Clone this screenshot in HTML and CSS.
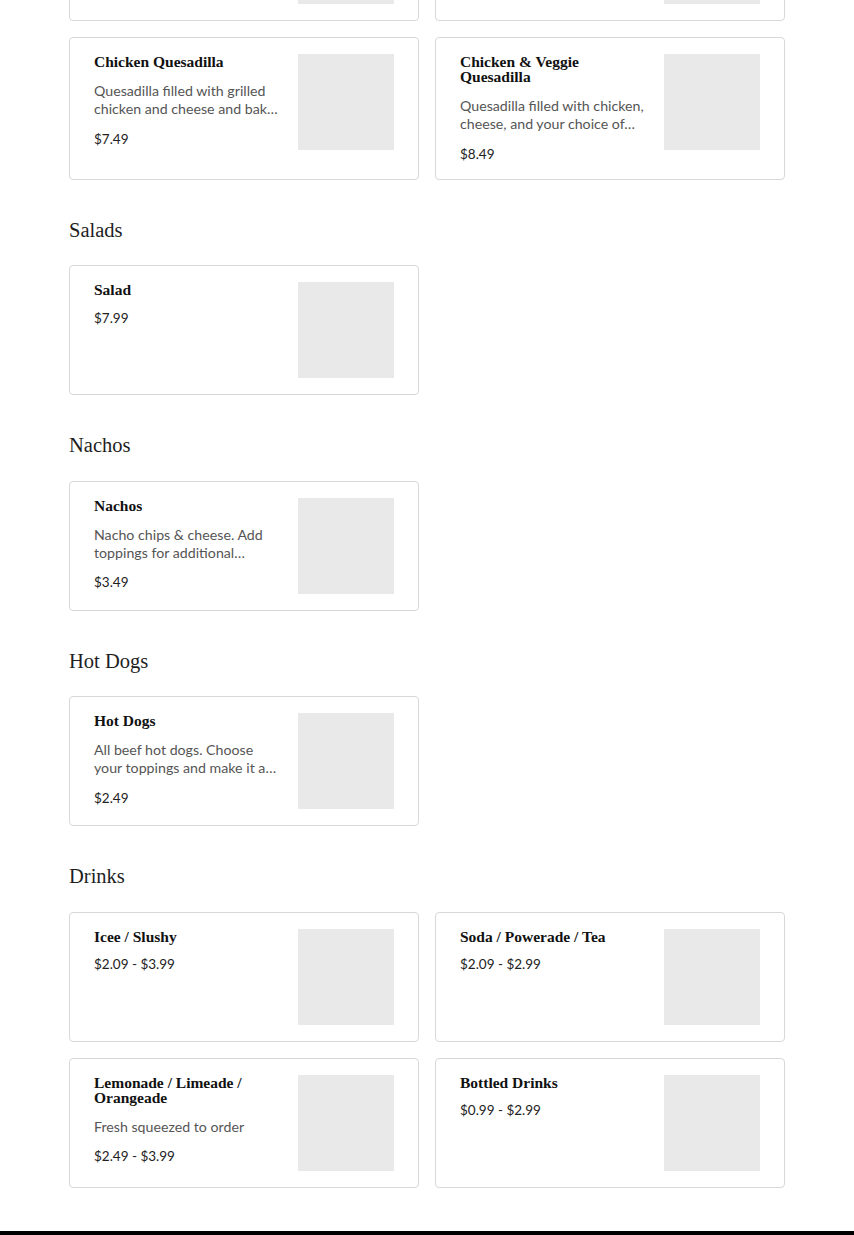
FILE: index.html
```html
<!DOCTYPE html>
<html lang="en">
<head>
<meta charset="utf-8">
<title>Menu</title>
<link rel="stylesheet" href="styles.css">
</head>
<body>
<main class="menu">
  <section class="section">
    <h2 class="section-title">Quesadillas</h2>
    <div class="grid">
      <article class="card">
        <div class="info">
          <h3 class="name">Cheese Quesadilla</h3>
          <p class="desc">Quesadilla filled with cheese and baked until golden…</p>
          <p class="price">$5.49</p>
        </div>
        <div class="thumb"></div>
      </article>
      <article class="card">
        <div class="info">
          <h3 class="name">Veggie Quesadilla</h3>
          <p class="desc">Quesadilla filled with cheese and your choice of…</p>
          <p class="price">$6.49</p>
        </div>
        <div class="thumb"></div>
      </article>
      <article class="card">
        <div class="info">
          <h3 class="name">Chicken Quesadilla</h3>
          <p class="desc">Quesadilla filled with grilled chicken and cheese and bak…</p>
          <p class="price">$7.49</p>
        </div>
        <div class="thumb"></div>
      </article>
      <article class="card">
        <div class="info">
          <h3 class="name">Chicken &amp; Veggie Quesadilla</h3>
          <p class="desc">Quesadilla filled with chicken, cheese, and your choice of…</p>
          <p class="price">$8.49</p>
        </div>
        <div class="thumb"></div>
      </article>
    </div>
  </section>

  <section class="section">
    <h2 class="section-title">Salads</h2>
    <div class="grid">
      <article class="card">
        <div class="info">
          <h3 class="name">Salad</h3>
          <p class="price">$7.99</p>
        </div>
        <div class="thumb"></div>
      </article>
    </div>
  </section>

  <section class="section">
    <h2 class="section-title">Nachos</h2>
    <div class="grid">
      <article class="card">
        <div class="info">
          <h3 class="name">Nachos</h3>
          <p class="desc">Nacho chips &amp; cheese. Add toppings for additional…</p>
          <p class="price">$3.49</p>
        </div>
        <div class="thumb"></div>
      </article>
    </div>
  </section>

  <section class="section">
    <h2 class="section-title">Hot Dogs</h2>
    <div class="grid">
      <article class="card">
        <div class="info">
          <h3 class="name">Hot Dogs</h3>
          <p class="desc">All beef hot dogs. Choose your toppings and make it a…</p>
          <p class="price">$2.49</p>
        </div>
        <div class="thumb"></div>
      </article>
    </div>
  </section>

  <section class="section">
    <h2 class="section-title">Drinks</h2>
    <div class="grid">
      <article class="card">
        <div class="info">
          <h3 class="name">Icee / Slushy</h3>
          <p class="price">$2.09 - $3.99</p>
        </div>
        <div class="thumb"></div>
      </article>
      <article class="card">
        <div class="info">
          <h3 class="name">Soda / Powerade / Tea</h3>
          <p class="price">$2.09 - $2.99</p>
        </div>
        <div class="thumb"></div>
      </article>
      <article class="card">
        <div class="info">
          <h3 class="name">Lemonade / Limeade / Orangeade</h3>
          <p class="desc">Fresh squeezed to order</p>
          <p class="price">$2.49 - $3.99</p>
        </div>
        <div class="thumb"></div>
      </article>
      <article class="card">
        <div class="info">
          <h3 class="name">Bottled Drinks</h3>
          <p class="price">$0.99 - $2.99</p>
        </div>
        <div class="thumb"></div>
      </article>
    </div>
  </section>
</main>
<footer class="footer"></footer>
</body>
</html>
```

FILE: styles.css
```css
html, body {
  margin: 0;
  padding: 0;
  background: #ffffff;
}

body {
  font-family: "Lato", "Liberation Sans", sans-serif;
  color: #222222;
}

.menu {
  max-width: 716px;
  margin: -194.5px auto 0;
  padding-bottom: 43px;
}

.section-title {
  font-family: "Liberation Serif", "DejaVu Serif", serif;
  font-weight: 400;
  font-size: 20.5px;
  line-height: 28px;
  color: #1e1e1e;
  margin: 36px 0 21.5px;
}

.grid {
  display: grid;
  grid-template-columns: 1fr 1fr;
  gap: 16px;
}

.card {
  display: flex;
  gap: 16px;
  padding: 16px 24px;
  border: 1px solid #d8d8d8;
  border-radius: 4px;
  background: #ffffff;
}

.info {
  flex: 1;
  min-width: 0;
  display: flex;
  flex-direction: column;
  gap: 12.5px;
}

.name {
  margin: 0;
  font-family: "Liberation Serif", "DejaVu Serif", serif;
  font-weight: 700;
  font-size: 15.5px;
  line-height: 15px;
  color: #111111;
}

.desc {
  margin: 0.5px 0 0;
  font-size: 14.2px;
  line-height: 18px;
  color: #555555;
}

.price {
  margin: 0;
  font-size: 13.5px;
  line-height: 17px;
  color: #222222;
}

.thumb {
  flex: 0 0 96px;
  width: 96px;
  height: 96px;
  background: #e9e9e9;
}

.footer {
  height: 200px;
  background: #000000;
}
```
